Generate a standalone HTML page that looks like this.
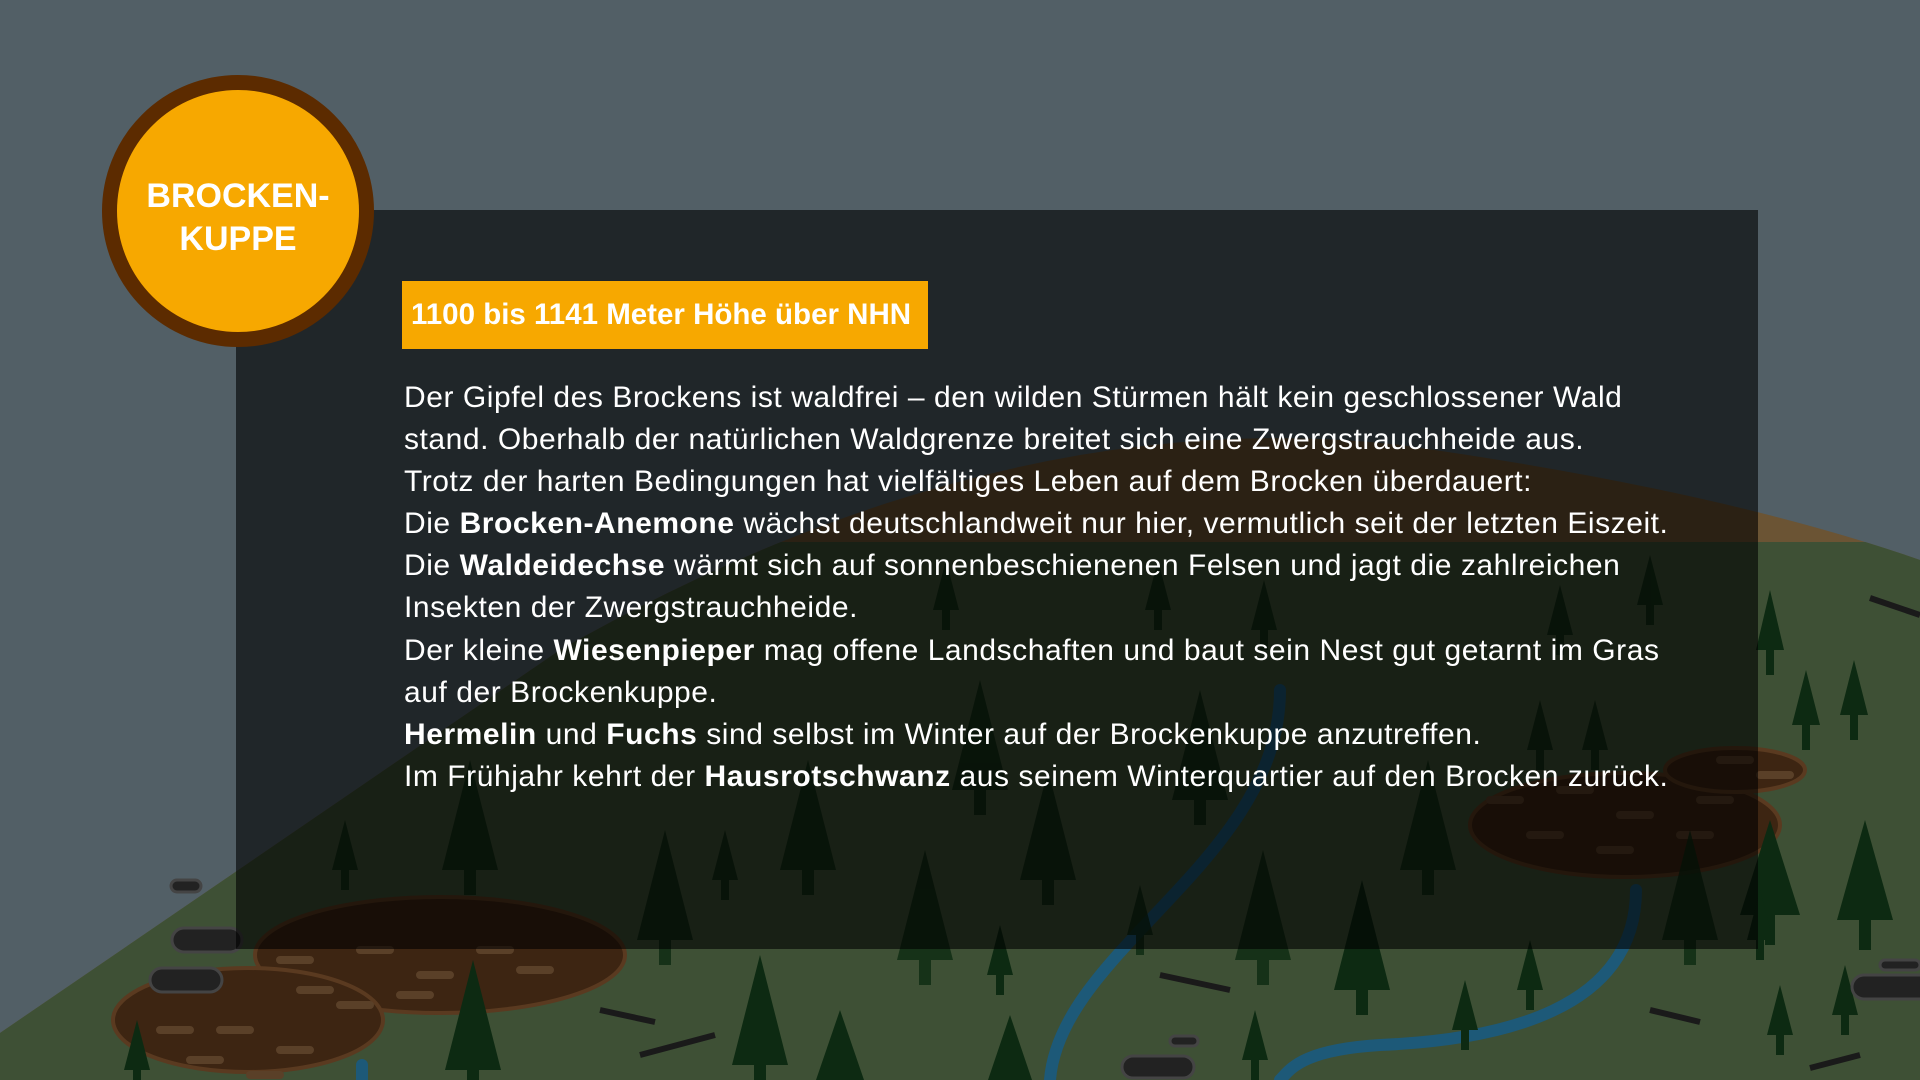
<!DOCTYPE html>
<html><head><meta charset="utf-8">
<style>
html,body{margin:0;padding:0;width:1920px;height:1080px;overflow:hidden;background:#525f66;font-family:"Liberation Sans",sans-serif}
svg.bg{position:absolute;left:0;top:0}
.panel{position:absolute;left:236px;top:210px;width:1522px;height:739px;background:rgba(0,0,0,0.6)}
.circle{position:absolute;left:102px;top:75px;width:242px;height:242px;border-radius:50%;background:#f7a800;border:15px solid #5c2b00;color:#fff;font-weight:bold;font-size:34px;text-align:center;line-height:43px;box-sizing:content-box}
.circle div{position:absolute;left:0;right:0;top:85px}
.label{position:absolute;left:402px;top:281px;width:526px;height:68px;background:#f7a800;color:#fff;font-weight:bold;font-size:29.5px;line-height:68px;padding-left:9px;box-sizing:border-box;white-space:nowrap}
.text{position:absolute;left:404px;top:377px;color:#fff;font-size:30px;line-height:42.1px;white-space:nowrap;letter-spacing:0.55px}
.text b{font-weight:bold}
</style></head><body>
<svg class="bg" width="1920" height="1080" viewBox="0 0 1920 1080">
<defs><clipPath id="g"><rect x="0" y="542" width="1920" height="600"/></clipPath></defs>
<path d="M0,1033 L560,650 Q1000,400 1400,445 Q1720,490 1920,560 L1920,1080 L0,1080Z" fill="#6b5434"/>
<path d="M0,1033 L560,650 Q1000,400 1400,445 Q1720,490 1920,560 L1920,1080 L0,1080Z" fill="#3e5035" clip-path="url(#g)"/>
<g fill="#3d2512" stroke="#5a3a20" stroke-width="4">
<ellipse cx="440" cy="955" rx="185" ry="58"/>
<ellipse cx="248" cy="1020" rx="135" ry="52"/>
<ellipse cx="1625" cy="825" rx="155" ry="52"/>
<ellipse cx="1735" cy="770" rx="70" ry="22"/>
</g>
<g stroke="#5a4028" stroke-width="8" stroke-linecap="round">
<path d="M280,960h30M360,950h30M420,975h30M480,950h30M300,990h30M400,995h30M520,970h30M340,1005h30M160,1030h30M220,1030h30M280,1050h30M190,1060h30M250,1075h30M1490,800h30M1560,790h30M1620,815h30M1700,800h30M1530,835h30M1600,850h30M1680,835h30M1720,760h30M1760,775h30"/>
</g>
<g stroke="#1a5a80" stroke-width="12" fill="none" stroke-linecap="round" opacity="0.9">
<path d="M1280,690 C1280,860 1060,950 1050,1080"/>
<path d="M1636,890 C1636,1010 1500,1040 1380,1045 C1300,1050 1290,1070 1280,1080"/>
<path d="M362,1065 L362,1080"/>
</g>
<g fill="#0d2a12">
<path d="M1770,820 l-30,95 h25 v30 h10 v-30 h25z"/>
<path d="M1770,590 l-14,60 h10 v25 h8 v-25 h10z"/>
<path d="M1806,670 l-14,55 h10 v25 h8 v-25 h10z"/>
<path d="M1854,660 l-14,55 h10 v25 h8 v-25 h10z"/>
<path d="M1865,820 l-28,100 h22 v30 h12 v-30 h22z"/>
<path d="M1845,965 l-13,50 h9 v20 h8 v-20 h9z"/>
<path d="M1780,985 l-13,50 h9 v20 h8 v-20 h9z"/>
<path d="M1760,890 l-13,50 h9 v20 h8 v-20 h9z"/>
<path d="M760,955 l-28,110 h22 v25 h12 v-25 h22z"/>
<path d="M840,1010 l-24,70 h48z"/>
<path d="M1010,1015 l-22,65 h44z"/>
<path d="M1255,1010 l-13,50 h9 v20 h8 v-20 h9z"/>
<path d="M137,1020 l-13,50 h9 v20 h8 v-20 h9z"/>
<path d="M473,960 l-28,110 h22 v25 h12 v-25 h22z"/>
<path d="M1530,940 l-13,50 h9 v20 h8 v-20 h9z"/>
<path d="M1465,980 l-13,50 h9 v20 h8 v-20 h9z"/>
<path d="M1000,925 l-13,50 h9 v20 h8 v-20 h9z"/>
<path d="M1362,880 l-28,110 h22 v25 h12 v-25 h22z"/>
<g opacity="0.8">
<path d="M665,830 l-28,110 h22 v25 h12 v-25 h22z"/>
<path d="M925,850 l-28,110 h22 v25 h12 v-25 h22z"/>
<path d="M1048,770 l-28,110 h22 v25 h12 v-25 h22z"/>
<path d="M1690,830 l-28,110 h22 v25 h12 v-25 h22z"/>
<path d="M470,760 l-28,110 h22 v25 h12 v-25 h22z"/>
<path d="M808,760 l-28,110 h22 v25 h12 v-25 h22z"/>
<path d="M1428,760 l-28,110 h22 v25 h12 v-25 h22z"/>
<path d="M1263,850 l-28,110 h22 v25 h12 v-25 h22z"/>
<path d="M345,820 l-13,50 h9 v20 h8 v-20 h9z"/>
<path d="M725,830 l-13,50 h9 v20 h8 v-20 h9z"/>
<path d="M1140,885 l-13,50 h9 v20 h8 v-20 h9z"/>
<path d="M1650,555 l-13,50 h9 v20 h8 v-20 h9z"/>
<path d="M1560,585 l-13,50 h9 v20 h8 v-20 h9z"/>
<path d="M1595,700 l-13,50 h9 v20 h8 v-20 h9z"/>
<path d="M946,560 l-13,50 h9 v20 h8 v-20 h9z"/>
<path d="M1158,560 l-13,50 h9 v20 h8 v-20 h9z"/>
<path d="M1264,580 l-13,50 h9 v20 h8 v-20 h9z"/>
<path d="M1540,700 l-13,50 h9 v20 h8 v-20 h9z"/>
<path d="M980,680 l-28,110 h22 v25 h12 v-25 h22z"/>
<path d="M1200,690 l-28,110 h22 v25 h12 v-25 h22z"/>
</g>
</g>
<g fill="#222" stroke="#444" stroke-width="3">
<rect x="172" y="928" width="70" height="24" rx="12"/>
<rect x="150" y="968" width="72" height="24" rx="12"/>
<rect x="171" y="880" width="30" height="12" rx="6"/>
<rect x="1852" y="975" width="80" height="24" rx="12"/>
<rect x="1880" y="960" width="40" height="10" rx="5"/>
<rect x="1122" y="1056" width="72" height="22" rx="11"/>
<rect x="1170" y="1036" width="28" height="10" rx="5"/>
</g>
<g stroke="#1a1a1a" stroke-width="6">
<path d="M1870,598 L1920,615"/><path d="M1160,975 L1230,990"/><path d="M640,1055 L715,1035"/>
<path d="M600,1010 L655,1022"/><path d="M1650,1010 L1700,1022"/><path d="M1810,1068 L1860,1055"/>
</g>
</svg>
<div class="panel"></div>
<div class="circle"><div>BROCKEN-<br>KUPPE</div></div>
<div class="label">1100 bis 1141 Meter Höhe über NHN</div>
<div class="text">Der Gipfel des Brockens ist waldfrei – den wilden Stürmen hält kein geschlossener Wald<br>stand. Oberhalb der natürlichen Waldgrenze breitet sich eine Zwergstrauchheide aus.<br>Trotz der harten Bedingungen hat vielfältiges Leben auf dem Brocken überdauert:<br>Die <b>Brocken-Anemone</b> wächst deutschlandweit nur hier, vermutlich seit der letzten Eiszeit.<br>Die <b>Waldeidechse</b> wärmt sich auf sonnenbeschienenen Felsen und jagt die zahlreichen<br>Insekten der Zwergstrauchheide.<br>Der kleine <b>Wiesenpieper</b> mag offene Landschaften und baut sein Nest gut getarnt im Gras<br>auf der Brockenkuppe.<br><b>Hermelin</b> und <b>Fuchs</b> sind selbst im Winter auf der Brockenkuppe anzutreffen.<br>Im Frühjahr kehrt der <b>Hausrotschwanz</b> aus seinem Winterquartier auf den Brocken zurück.</div>
</body></html>
